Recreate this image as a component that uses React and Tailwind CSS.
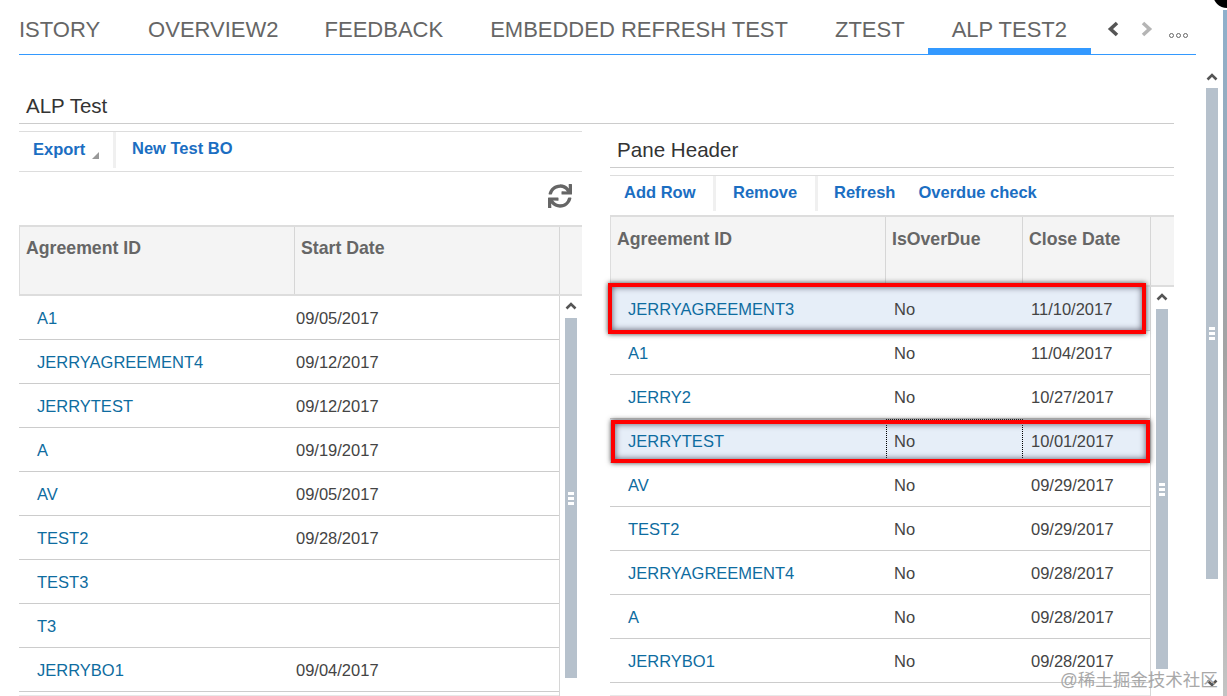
import React from "react";
import { FaSync } from "react-icons/fa";

const leftRows = [
  ["A1", "09/05/2017"],
  ["JERRYAGREEMENT4", "09/12/2017"],
  ["JERRYTEST", "09/12/2017"],
  ["A", "09/19/2017"],
  ["AV", "09/05/2017"],
  ["TEST2", "09/28/2017"],
  ["TEST3", ""],
  ["T3", ""],
  ["JERRYBO1", "09/04/2017"],
];

const rightRows = [
  ["JERRYAGREEMENT3", "No", "11/10/2017", true],
  ["A1", "No", "11/04/2017"],
  ["JERRY2", "No", "10/27/2017"],
  ["JERRYTEST", "No", "10/01/2017", true, true],
  ["AV", "No", "09/29/2017"],
  ["TEST2", "No", "09/29/2017"],
  ["JERRYAGREEMENT4", "No", "09/28/2017"],
  ["A", "No", "09/28/2017"],
  ["JERRYBO1", "No", "09/28/2017"],
];

const tabs = [
  ["ISTORY", "pr-6"],
  ["OVERVIEW2", "pl-6 pr-[22px]"],
  ["FEEDBACK", "pl-6 pr-[23px]"],
  ["EMBEDDED REFRESH TEST", "pl-6 pr-[23px]"],
  ["ZTEST", "pl-6 pr-[23px]"],
  ["ALP TEST2", "px-6 border-b-[6px] border-[#3399ff]"],
];

function Grip() {
  return (
    <div className="flex flex-col gap-[2px] items-center">
      <span className="w-[6px] h-[3px] bg-white" />
      <span className="w-[6px] h-[3px] bg-white" />
      <span className="w-[6px] h-[3px] bg-white" />
    </div>
  );
}

function ChevV({ down = false, className = "" }) {
  return (
    <svg width="12" height="8" viewBox="0 0 12 8" className={`shrink-0 ${className}`}>
      <polyline
        points={down ? "1.5,1.5 6,6 10.5,1.5" : "1.5,6.5 6,2 10.5,6.5"}
        fill="none"
        stroke="#555"
        strokeWidth="2.6"
      />
    </svg>
  );
}

function ChevH({ right = false, color, className = "" }) {
  return (
    <svg width="13" height="16" viewBox="0 0 13 16" className={`shrink-0 ${className}`}>
      <polyline
        points={right ? "3,2 9.5,8 3,14" : "10,2 3.5,8 10,14"}
        fill="none"
        stroke={color}
        strokeWidth="3.6"
      />
    </svg>
  );
}

function Scroll({ thumb }) {
  return (
    <div className="w-[23px] shrink-0 border-l border-[#d6d6d6] flex flex-col items-start pl-[5px]">
      <ChevV className="mt-[6px]" />
      <div className={`w-[12px] mt-[8px] bg-[#b6c1cc] flex items-center justify-center shrink-0 ${thumb}`}>
        <Grip />
      </div>
    </div>
  );
}

function ToolLink({ children }) {
  return <span className="text-[16.5px] font-bold text-[#1b6ec2]">{children}</span>;
}

function HeadCell({ className = "", children }) {
  return (
    <div className={`shrink-0 h-full border-r border-[#d6d6d6] text-[17.7px] font-bold text-[#666] leading-none ${className}`}>
      {children}
    </div>
  );
}

export default function App() {
  return (
    <div
      className="relative w-[1227px] h-[696px] overflow-hidden bg-white flex"
      style={{ fontFamily: '"Liberation Sans", Arial, sans-serif' }}
    >
      <div className="w-[1200px] shrink-0 pl-[19px]">
        {/* Tabs */}
        <div className="w-[1177px] h-[55px] border-b border-[#3399ff] flex items-start">
          {tabs.map(([t, cls]) => (
            <div key={t} className={`h-[54px] pt-[17px] text-[22px] leading-[26px] text-[#666] whitespace-nowrap ${cls}`}>
              {t}
            </div>
          ))}
          <ChevH color="#555" className="ml-[16px] mt-[21px]" />
          <ChevH right color="#b5b5b5" className="ml-[20px] mt-[21px]" />
          <div className="flex gap-[2px] ml-[16px] mt-[33px]">
            <span className="w-[5px] h-[5px] rounded-full border border-[#666]" />
            <span className="w-[5px] h-[5px] rounded-full border border-[#666]" />
            <span className="w-[5px] h-[5px] rounded-full border border-[#666]" />
          </div>
        </div>

        {/* Content */}
        <div className="w-[1155px] mt-[34px]">
          <div className="h-[35px] border-b border-[#ccc] pl-[7px] text-[20.5px] leading-[33px] text-[#333]">ALP Test</div>

          <div className="flex gap-[28px] mt-[7px]">
            {/* Left pane */}
            <div className="w-[563px] shrink-0">
              <div className="h-[41px] border-y border-[#ddd] flex">
                <div className="w-[97px] h-[36px] border-r-[3px] border-[#f0f0f0] pl-[14px] pt-[5px] flex items-start">
                  <ToolLink>Export</ToolLink>
                  <span className="w-0 h-0 ml-[7px] mt-[15px] border-l-[7px] border-l-transparent border-b-[7px] border-b-[#999]" />
                </div>
                <div className="pl-[16px] pt-[4px]">
                  <ToolLink>New Test BO</ToolLink>
                </div>
              </div>
              <div className="h-[53px] flex justify-end pr-[10px] pt-[12px]">
                <FaSync className="text-[24px] text-[#666]" />
              </div>
              <div className="h-[71px] border-y-[2px] border-[#ddd] bg-[#f4f4f4] border-l border-l-[#ddd] flex">
                <HeadCell className="w-[275px] pl-[6px] pt-[13px]">Agreement ID</HeadCell>
                <HeadCell className="w-[265px] pl-[6px] pt-[13px]">Start Date</HeadCell>
              </div>
              <div className="flex h-[400px]">
                <div className="w-[540px] h-full shrink-0 border-b border-[#e8e8e8]">
                  {leftRows.map(([id, date]) => (
                    <div key={id} className="h-[44px] pt-[2px] border-b border-[#ccc] flex items-center text-[16.5px]">
                      <span className="w-[277px] pl-[18px] text-[#0e6ca0]">{id}</span>
                      <span className="text-[#444]">{date}</span>
                    </div>
                  ))}
                </div>
                <Scroll thumb="h-[360px]" />
              </div>
            </div>

            {/* Right pane */}
            <div className="w-[564px] shrink-0">
              <div className="h-[37px] border-b border-[#ccc] pl-[7px] pt-[7px] text-[20.6px] leading-[24px] text-[#333]">Pane Header</div>
              <div className="h-[40px] mt-[7px] border-t border-[#ddd] flex items-start">
                <div className="h-[35px] w-[106px] border-r-[3px] border-[#f0f0f0] pl-[14px] pt-[4px]">
                  <ToolLink>Add Row</ToolLink>
                </div>
                <div className="h-[35px] w-[102px] border-r-[3px] border-[#f0f0f0] pl-[17px] pt-[4px]">
                  <ToolLink>Remove</ToolLink>
                </div>
                <div className="pl-[16px] pt-[4px]">
                  <ToolLink>Refresh</ToolLink>
                </div>
                <div className="pl-[23px] pt-[4px]">
                  <ToolLink>Overdue check</ToolLink>
                </div>
              </div>
              <div className="h-[72px] border-y-[2px] border-[#ddd] bg-[#f4f4f4] border-l border-l-[#ddd] flex">
                <HeadCell className="w-[275px] pl-[6px] pt-[14px]">Agreement ID</HeadCell>
                <HeadCell className="w-[137px] pl-[6px] pt-[14px]">IsOverDue</HeadCell>
                <HeadCell className="w-[128px] pl-[6px] pt-[14px]">Close Date</HeadCell>
              </div>
              <div className="flex h-[409px]">
                <div className="w-[540px] h-full shrink-0 border-b border-[#e8e8e8]">
                  {rightRows.map(([id, over, date, sel, focus]) => (
                    <div
                      key={id}
                      className={`h-[44px] border-b border-[#ccc] flex items-center text-[16.5px] ${sel ? "bg-[#e6eef8]" : ""}`}
                    >
                      <span className="w-[276px] pl-[18px] pt-[2px] text-[#0e6ca0]">{id}</span>
                      <span
                        className={`w-[137px] h-full flex items-center pt-[2px] text-[#444] ${
                          focus ? "pl-[7px] border border-dotted border-black" : "pl-[8px]"
                        }`}
                      >
                        {over}
                      </span>
                      <span className="pl-[8px] pt-[2px] text-[#444]">{date}</span>
                    </div>
                  ))}
                </div>
                <Scroll thumb="h-[360px]" />
              </div>
            </div>
          </div>
        </div>
      </div>

      {/* Page scrollbar */}
      <div className="w-[27px] shrink-0 flex">
        <div className="w-[23px] flex flex-col items-start pl-[6px] shrink-0">
          <ChevV className="mt-[73px]" />
          <div className="w-[12px] h-[491px] mt-[7px] bg-[#b6c1cc] flex items-center justify-center shrink-0">
            <Grip />
          </div>
          <ChevV down className="mt-[100px]" />
        </div>
        <div className="w-[4px] mt-[10px] h-[686px] bg-gradient-to-b from-[#8fb0cc] via-[#a3a3a3] to-[#c4c4c4] shrink-0" />
      </div>

      {/* Annotation boxes */}
      <div className="absolute left-[608px] top-[283px] w-[538px] h-[51px] border-[4px] border-[#f00] shadow-[0_0_5px_#444,inset_0_0_6px_#556]" />
      <div className="absolute left-[611px] top-[420px] w-[539px] h-[43px] border-[4px] border-[#f00] shadow-[0_0_5px_#444,inset_0_0_6px_#556]" />

      {/* Corner close button */}
      <div className="absolute right-[-14px] top-[-20px] w-[28px] h-[28px] rounded-full bg-black" />

      {/* Watermark */}
      <div
        className="absolute left-[1060px] top-[669px] text-[17.5px] leading-[22px] text-[#a8a8a8] whitespace-nowrap"
        style={{ fontFamily: '"Liberation Sans", "Noto Sans CJK SC", sans-serif' }}
      >
        @稀土掘金技术社区
      </div>
    </div>
  );
}
